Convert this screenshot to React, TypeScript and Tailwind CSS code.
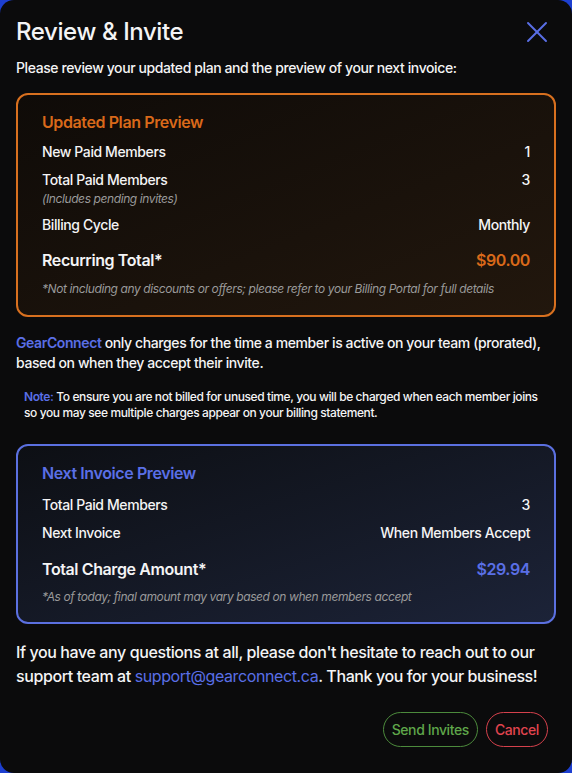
import { X } from "lucide-react";

function Row({ label, value, sub }: { label: string; value: string; sub?: string }) {
  return (
    <div className="flex items-start justify-between">
      <div className="flex flex-col">
        <span className="text-[14px] leading-[20px] font-medium">{label}</span>
        {sub && <span className="mt-[1px] text-[12px] leading-[16px] italic text-[#9a9a9a]">{sub}</span>}
      </div>
      <span className="text-[14px] leading-[20px] font-medium">{value}</span>
    </div>
  );
}

export default function App() {
  return (
    <div className="min-h-screen bg-[#1d3fd0]" style={{ fontFamily: "Inter, 'Noto Sans', sans-serif" }}>
      <div className="h-[773px] rounded-[14px] bg-[#0b0b0c] px-4 pt-[16px] text-[#f4f4f5] tracking-[-0.025em]">
        <div className="flex h-8 items-center justify-between">
          <h1 className="text-[24px] leading-[32px] font-medium">Review &amp; Invite</h1>
          <X className="mr-[1px] h-[36px] w-[36px] shrink-0 text-[#5a6fe6]" strokeWidth={1.3} />
        </div>
        <p className="mt-[10px] text-[14px] leading-[20px] font-medium">
          Please review your updated plan and the preview of your next invoice:
        </p>

        <div className="mt-[15px] rounded-[12px] border-2 border-[#d8701f] bg-gradient-to-br from-[#0f0b08] to-[#22170d] px-[24px] pt-[16px] pb-[18px]">
          <h2 className="text-[16px] leading-[22px] font-semibold text-[#d9691a]">Updated Plan Preview</h2>
          <div className="mt-[9px] flex flex-col gap-[8px]">
            <Row label="New Paid Members" value="1" />
            <Row label="Total Paid Members" value="3" sub="(Includes pending invites)" />
            <Row label="Billing Cycle" value="Monthly" />
          </div>
          <div className="mt-[14px] flex items-center justify-between text-[16px] leading-[22px] font-semibold">
            <span>Recurring Total*</span>
            <span className="text-[#d9691a]">$90.00</span>
          </div>
          <p className="mt-[10px] text-[12px] leading-[16px] italic text-[#9a9a9a]">
            *Not including any discounts or offers; please refer to your Billing Portal for full details
          </p>
        </div>

        <p className="mt-[16px] text-[14px] leading-[20px] font-medium">
          <span className="font-semibold text-[#5a6fe6]">GearConnect</span> only charges for the time a member is active on your team (prorated), based on when they accept their invite.
        </p>
        <p className="mt-[16px] px-[8px] text-[12px] leading-[16px] font-medium">
          <span className="font-semibold text-[#5a6fe6]">Note:</span> To ensure you are not billed for unused time, you will be charged when each member joins so you may see multiple charges appear on your billing statement.
        </p>

        <div className="mt-[23px] rounded-[12px] border-2 border-[#5b70e0] bg-gradient-to-br from-[#0d0f14] to-[#1c2338] px-[24px] pt-[16px] pb-[17px]">
          <h2 className="text-[16px] leading-[22px] font-semibold text-[#5a6fe6]">Next Invoice Preview</h2>
          <div className="mt-[11px] flex flex-col gap-[8px]">
            <Row label="Total Paid Members" value="3" />
            <Row label="Next Invoice" value="When Members Accept" />
          </div>
          <div className="mt-[15px] flex items-center justify-between text-[16px] leading-[22px] font-semibold">
            <span>Total Charge Amount*</span>
            <span className="text-[#5a6fe6]">$29.94</span>
          </div>
          <p className="mt-[9px] text-[12px] leading-[16px] italic text-[#9a9a9a]">
            *As of today; final amount may vary based on when members accept
          </p>
        </div>

        <p className="mt-[16px] text-[16px] leading-[24px] font-medium">
          If you have any questions at all, please don't hesitate to reach out to our support team at{" "}
          <span className="font-normal text-[#5a6fe6]">support@gearconnect.ca</span>. Thank you for your business!
        </p>

        <div className="mt-[24px] flex justify-end gap-[8px] pr-[8px]">
          <button className="h-[35px] rounded-full border border-[#4c8a3c] px-[8px] text-[14px] font-medium text-[#5fa64a]">
            Send Invites
          </button>
          <button className="h-[35px] rounded-full border border-[#d5414c] px-[8px] text-[14px] font-medium text-[#e0444f]">
            Cancel
          </button>
        </div>
      </div>
    </div>
  );
}
